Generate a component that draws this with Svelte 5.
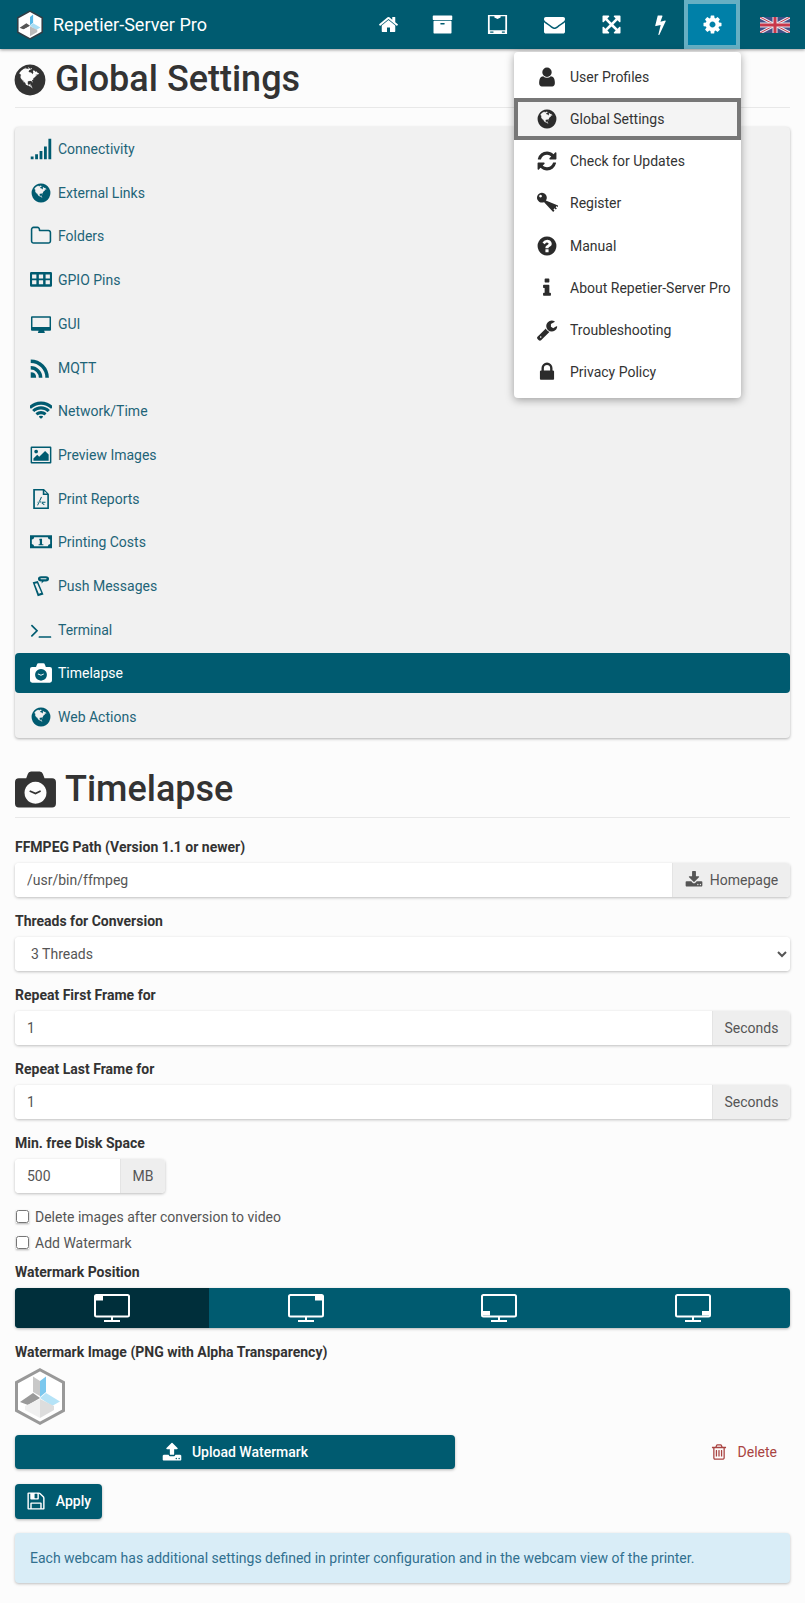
<script lang="ts">
  // Font Awesome 4 style glyphs on a 1792 grid, plus a few drawn for this page
  const icons: Record<string, string> = {
    home: "M1472 992v480q0 26-19 45t-45 19h-384v-384h-256v384h-384q-26 0-45-19t-19-45v-480q0-1 .5-3t.5-3l575-474 575 474q1 2 1 6zm223-69l-62 74q-8 9-21 11h-3q-13 0-21-7l-692-577-692 577q-12 8-24 7-13-2-21-11l-62-74q-8-10-7-23.5t11-21.5l719-599q32-26 76-26t76 26l244 204v-195q0-14 9-23t23-9h192q14 0 23 9t9 23v408l219 182q10 8 11 21.5t-7 23.5z",
    archive: "M1088 832q0-26-19-45t-45-19h-256q-26 0-45 19t-19 45 19 45 45 19h256q26 0 45-19t19-45zm576-192v960q0 26-19 45t-45 19h-1408q-26 0-45-19t-19-45v-960q0-26 19-45t45-19h1408q26 0 45 19t19 45zm64-448v256q0 26-19 45t-45 19h-1536q-26 0-45-19t-19-45v-256q0-26 19-45t45-19h1536q26 0 45 19t19 45z",
    printer: "M80 80h1632v1632H80z M230 200v1190h1332V200h-400v100L896 420 630 300V200z M270 1500h280v90H270z M1270 1500h250v90h-250z",
    envelope: "M1792 710v794q0 66-47 113t-113 47h-1472q-66 0-113-47t-47-113v-794q44 49 101 87 362 246 497 345 57 42 92.5 65.5t94.5 48 110 24.5h2q51 0 110-24.5t94.5-48 92.5-65.5q170-123 498-345 57-39 100-87zm0-294q0 79-49 151t-122 123q-376 261-468 325-10 7-42.5 30.5t-54 38-52 32.5-57.5 27-50 9h-2q-23 0-50-9t-57.5-27-52-32.5-54-38-42.5-30.5q-91-64-262-182.5t-205-142.5q-62-42-117-115.5t-55-136.5q0-78 41.5-130t118.5-52h1472q65 0 112.5 47t47.5 113z",
    expand: "M1411 541l-355 355 355 355 144-144q29-31 70-14 39 17 39 59v448q0 26-19 45t-45 19h-448q-42 0-59-40-17-39 14-69l144-144-355-355-355 355 144 144q31 30 14 69-17 40-59 40h-448q-26 0-45-19t-19-45v-448q0-42 40-59 39-17 69 14l144 144 355-355-355-355-144 144q-19 19-45 19-12 0-24-5-40-17-40-59v-448q0-26 19-45t45-19h448q42 0 59 40 17 39-14 69l-144 144 355 355 355-355-144-144q-31-30-14-69 17-40 59-40h448q26 0 45 19t19 45v448q0 42-39 59-13 5-25 5-26 0-45-19z",
    bolt: "M1333 566q18 20 7 44l-540 1157q-13 25-42 25-4 0-14-2-17-5-25.5-19t-4.5-30l197-808-406 101q-4 1-12 1-18 0-31-11-18-15-13-39l201-825q4-14 16-23t28-9h328q19 0 32 12.5t13 29.5q0 8-5 18l-171 463 396-98q8-2 12-2 19 0 34 15z",
    cog: "M1152 896q0-106-75-181t-181-75-181 75-75 181 75 181 181 75 181-75 75-181zm512-109v222q0 12-8 23t-20 13l-185 28q-19 54-39 91 35 50 107 138 10 12 10 25t-9 23q-27 37-99 108t-94 71q-12 0-26-9l-138-108q-44 23-91 38-16 136-29 186-7 28-36 28h-222q-14 0-24.5-8.5t-11.5-21.5l-28-184q-49-16-90-37l-141 107q-10 9-25 9-14 0-25-11-126-114-165-168-7-10-7-23 0-12 8-23 15-21 51-66.5t54-70.5q-27-50-41-99l-183-27q-13-2-21-12.5t-8-23.5v-222q0-12 8-23t19-13l186-28q14-46 39-92-40-57-107-138-10-12-10-24 0-10 9-23 26-36 98.5-107.5t94.5-71.5q13 0 26 10l138 107q44-23 91-38 16-136 29-186 7-28 36-28h222q14 0 24.5 8.5t11.5 21.5l28 184q49 16 90 37l142-107q9-9 24-9 13 0 25 10 129 119 165 170 7 8 7 22 0 12-8 23-15 21-51 66.5t-54 70.5q26 50 41 98l183 28q13 2 21 12.5t8 23.5z",
    user: "M1536 1399q0 109-62.5 187t-150.5 78h-854q-88 0-150.5-78t-62.5-187q0-85 8.5-160.5t31.5-152 58.5-131 94-89 134.5-34.5q131 128 313 128t313-128q76 0 134.5 34.5t94 89 58.5 131 31.5 152 8.5 160.5zm-256-887q0 159-112.5 271.5t-271.5 112.5-271.5-112.5-112.5-271.5 112.5-271.5 271.5-112.5 271.5 112.5 112.5 271.5z",
    globe: "M896 128q209 0 385.5 103t279.5 279.5 103 385.5-103 385.5-279.5 279.5-385.5 103-385.5-103-279.5-279.5-103-385.5 103-385.5 279.5-279.5 385.5-103zm274 521q-2 1-9.5 9.5t-13.5 9.5q2 0 4.5-5t5-11 3.5-7q6-7 22-15 14-6 52-12 34-8 51 11-2-2 9.5-13t14.5-12q3-2 15-4.5t15-7.5l2-22q-12 1-17.5-7t-6.5-21q0 2-6 8 0-7-4.5-8t-11.5 1-9 1q-10-3-15-7.5t-8-16.5-4-15q-2-5-9.5-11t-9.5-10q-1-2-2.5-5.5t-3-6.5-4-5.5-5.5-2.5-7 5-7.5 10-4.5 5q-3-2-6-1.5t-4.5 1-4.5 3-5 3.5q-3 2-8.5 3t-8.5 2q15-5-1-11-10-4-16-3 9-4 7.5-12t-8.5-14h5q-1-4-8.5-8.5t-17.5-8.5-13-6q-8-5-34-9.5t-33-.5q-5 6-4.5 10.5t4 14 3.5 12.5q1 6-5.5 13t-6.5 12q0 7 14 15.5t10 21.5q-3 8-16 16t-16 12q-5 8-1.5 18.5t10.5 16.5q2 2 1.5 4t-3.5 4.5-5.5 4-6.5 3.5l-3 2q-11 5-20.5-6t-13.5-26q-7-25-16-30-23-8-29 1-5-13-41-26-25-9-58-4 6-1 0-15-7-15-19-12 3-6 4-17.5t1-13.5q3-13 12-23 1-1 7-8.5t9.5-13.5.5-6q35 4 50-11 5-5 11.5-17t10.5-17q9-6 14-5.5t14.5 5.5 14.5 5q14 1 15.5-11t-7.5-20q12 1 3-17-4-7-8-9-12-4-27 5-8 4 2 8-1-1-9.5 10.5t-16.5 17.5-14-5q-1-1-5.5-13.5t-9.5-13.5q-8 0-16 15 3-8-11-15t-24-8q19-12-8-27-7-4-20.5-5t-19.5 4q-5 7-5.5 11.5t5 8 10.5 5.5 11.5 4 8.5 3q14 10 8 14-2 1-8.5 3.5t-11.5 4.5-6 4q-3 4 0 14t-2 14q-5-5-9-17.5t-7-16.5q7 9-25 6l-10-1q-4 0-16 2t-20.5 1-13.5-8q-4-8 0-20 1-4 4-2-4-3-11-9.5t-10-8.5q-46 15-94 41 6 1 12-1 5-2 13-6.5t10-5.5q34-14 42-7l5-5q14 16 20 25-7-4-30-1-20 6-22 12 7 12 5 18-4-3-11.5-10t-14.5-11-15-5q-16 0-22 1-146 80-235 222 7 7 12 8 4 1 5 9t2.5 11 11.5-3q9 8 3 19 1-1 44 27 19 17 21 21 3 11-10 18-1-2-9-9t-9-4q-3 5 .5 18.5t10.5 12.5q-7 0-9.5 16t-2.5 35.5-1 23.5l2 1q-3 12 5.5 34.5t21.5 19.5q-13 3 20 43 6 8 8 9 3 2 12 7.5t15 10 10 10.5q4 5 10 22.5t14 23.5q-2 6 9.5 20t10.5 23q-1 0-2.5 1t-2.5 1q3 7 15.5 14t15.5 13q1 3 2 10t3 11 8 2q2-20-24-62-15-25-17-29-3-5-5.5-15.5t-4.5-14.5q2 0 6 1.5t8.5 3.5 7.5 4 2 3q-3 7 2 17.5t12 18.5 17 19 12 13q6 6 14 19.5t0 13.5q9 0 20 10.5t17 19.5q5 8 8 26t5 24q2 7 8.5 13.5t12.5 9.5l16 8 13 7q5 2 18.5 10.5t21.5 11.5q10 4 16 4t14.5-2.5 13.5-3.5q15-2 29 15t21 21q36 19 55 11-2 1 .5 7.5t8 15.5 9 14.5 5.5 8.5q5 6 18 15t18 15q6-4 7-9-3 8 7 20t18 10q14-3 14-32-31 15-49-18 0-1-2.5-5.5t-4-8.5-2.5-8.5 0-7.5 5-3q9 0 10-3.5t-2-12.5-4-13q-1-8-11-20t-12-15q-5 9-16 8t-16-9q0 1-1.5 5.5t-1.5 6.5q-13 0-15-1 1-3 2.5-17.5t3.5-22.5q1-4 5.5-12t7.5-14.5 4-12.5-4.5-9.5-17.5-2.5q-19 1-26 20-1 3-3 10.5t-5 11.5-9 7q-7 3-24 2t-24-5q-13-8-22.5-29t-9.5-37q0-10 2.5-26.5t3-25-5.5-24.5q3-2 9-9.5t10-10.5q2-1 4.5-1.5t4.5 0 4-1.5 3-6q-1-1-4-3-3-3-4-3 7 3 28.5-1.5t27.5 1.5q15 11 22-2 0-1-2.5-9.5t-.5-13.5q5 27 29 9 3 3 15.5 5t17.5 5q3 2 7 5.5t5.5 4.5 5-.5 8.5-6.5q10 14 12 24 11 40 19 44 7 3 11 2t4.5-9.5 0-14-1.5-12.5l-1-8v-18l-1-8q-15-3-18.5-12t1.5-18.5 15-18.5q1-1 8-3.5t15.5-6.5 12.5-8q21-19 15-35 7 0 11-9-1 0-5-3t-7.5-5-4.5-2q9-5 2-16 5-3 7.5-11t7.5-10q9 12 21 2 8-8 1-16 5-7 20.5-10.5t18.5-9.5q7 2 8-2t1-12 3-12q4-5 15-9t13-5l17-11q3-4 0-4 18 2 31-11 10-11-6-20 3-6-3-9.5t-15-5.5q3-1 11.5-.5t10.5-1.5q15-10-7-16-17-5-43 12z",
    refresh: "M1639 1056q0 5-1 7-64 268-268 434.5t-478 166.5q-146 0-282.5-55t-243.5-157l-129 129q-19 19-45 19t-45-19-19-45v-448q0-26 19-45t45-19h448q26 0 45 19t19 45-19 45l-137 137q71 66 161 102t187 36q134 0 250-65t186-179q11-17 53-117 8-23 30-23h192q13 0 22.5 9.5t9.5 22.5zm25-800v448q0 26-19 45t-45 19h-448q-26 0-45-19t-19-45 19-45l138-138q-148-137-349-137-134 0-250 65t-186 179q-11 17-53 117-8 23-30 23h-199q-13 0-22.5-9.5t-9.5-22.5v-7q65-268 270-434.5t480-166.5q146 0 284 55.5t245 156.5l130-129q19-19 45-19t45 19 19 45z",
    key: "M480 60a400 400 0 1 1 -.1 0z M370 230a110 110 0 1 0 .1 0z M800 700L660 840l740 780 110-110-90-90 90-90 100 100 90-90-100-100 90-90 90 90 20-130z",
    question: "M1024 1376v-192q0-14-9-23t-23-9h-192q-14 0-23 9t-9 23v192q0 14 9 23t23 9h192q14 0 23-9t9-23zm256-672q0-88-55.5-163t-138.5-116-170-41q-243 0-371 213-15 24 8 42l132 100q7 6 19 6 16 0 25-12 53-68 86-92 34-24 86-24 48 0 85.5 26t37.5 59q0 38-20 61t-68 45q-63 28-115.5 86.5t-52.5 125.5v36q0 14 9 23t23 9h192q14 0 23-9t9-23q0-19 21.5-49.5t54.5-49.5q32-18 49-28.5t46-35 44.5-48 28-60.5 12.5-81zm384 192q0 209-103 385.5t-279.5 279.5-385.5 103-385.5-103-279.5-279.5-103-385.5 103-385.5 279.5-279.5 385.5-103 385.5 103 279.5 279.5 103 385.5z",
    info: "M1216 1344v128q0 26-19 45t-45 19h-512q-26 0-45-19t-19-45v-128q0-26 19-45t45-19h64v-384h-64q-26 0-45-19t-19-45v-128q0-26 19-45t45-19h384q26 0 45 19t19 45v576h64q26 0 45 19t19 45zm-128-1152v192q0 26-19 45t-45 19h-256q-26 0-45-19t-19-45v-192q0-26 19-45t45-19h256q26 0 45 19t19 45z",
    wrench: "M448 1472q0-26-19-45t-45-19-45 19-19 45 19 45 45 19 45-19 19-45zm644-420l-682 682q-37 37-90 37-52 0-91-37l-106-108q-38-36-38-90 0-53 38-91l681-681q39 98 114.5 173.5t173.5 114.5zm634-435q0 39-23 106-47 134-164.5 217.5t-258.5 83.5q-185 0-316.5-131.5t-131.5-316.5 131.5-316.5 316.5-131.5q58 0 121.5 16.5t107.5 46.5q16 11 16 28t-16 28l-293 169v224l193 107q5-3 79-48.5t135.5-81 70.5-35.5q15 0 23.5 10t8.5 25z",
    lock: "M640 768h512v-192q0-106-75-181t-181-75-181 75-75 181v192zm832 96v576q0 40-28 68t-68 28h-960q-40 0-68-28t-28-68v-576q0-40 28-68t68-28h32v-192q0-184 132-316t316-132 316 132 132 316v192h32q40 0 68 28t28 68z",
    signal: "M60 1500h230v230H60z M420 1330h230v400H420z M780 1060h230v670H780z M1140 700h230v1030h-230z M1500 60h230v1670h-230z",
    folder: "M1600 1312v-704q0-40-28-68t-68-28h-704q-40 0-68-28t-28-68v-64q0-40-28-68t-68-28h-320q-40 0-68 28t-28 68v960q0 40 28 68t68 28h1216q40 0 68-28t28-68zm128-704v704q0 92-66 158t-158 66h-1216q-92 0-158-66t-66-158v-960q0-92 66-158t158-66h320q92 0 158 66t66 158v32h672q92 0 158 66t66 158z",
    pins: "M100 250h1592q100 0 100 100v1000q0 100-100 100H100q-100 0-100-100V350q0-100 100-100z M170 450h350v330H170z M720 450h350v330H720z M1270 450h350v330h-350z M170 920h350v330H170z M720 920h350v330H720z M1270 920h350v330h-350z",
    desktop: "M160 260h1472q80 0 80 80v1020q0 80-80 80h-480l60 190H640l60-190H160q-80 0-80-80V340q0-80 80-80z M200 380v770h1392V380z",
    rss: "M60 1240q440 0 440 440H60z M60 730A950 950 0 0 1 1010 1680H720A660 660 0 0 0 60 1020z M60 200A1480 1480 0 0 1 1540 1680H1250A1190 1190 0 0 0 60 490z",
    wifi: "M896 1523q-20 0-93-73.5t-73-93.5q0-32 62.5-54t103.5-22 103.5 22 62.5 54q0 20-73 93.5t-93 73.5zm270-271q-2 0-40-25t-101.5-50-128.5-25-128.5 25-101 50-40.5 25q-18 0-93.5-75t-75.5-93q0-13 10-23 78-77 196-121t233-44 233 44 196 121q10 10 10 23 0 18-75.5 93t-93.5 75zm273-272q-11 0-23-8-136-105-252-154.5t-268-49.5q-85 0-170.5 22t-149 53-113.5 62-79 53-31 22q-17 0-92-75t-75-93q0-12 10-22 132-132 320-205t380-73 380 73 320 205q10 10 10 22 0 18-75 93t-92 75zm271-271q-11 0-22-9-179-157-371.5-236.5t-420.5-79.5-420.5 79.5-371.5 236.5q-11 9-22 9-17 0-92.5-75t-75.5-93q0-13 10-23 187-186 445-288t527-102 527 102 445 288q10 10 10 23 0 18-75.5 93t-92.5 75z",
    image: "M130 200h1532q80 0 80 80v1232q0 80-80 80H130q-80 0-80-80V280q0-80 80-80z M170 320v1150h1452V320z M500 460a150 150 0 1 0 .1 0z M280 1360v-170l310-310 160 160 480-480 290 290v510z",
    pdf: "M260 80h880l400 400v1230H260z M400 210v1370h1010V580h-370V210z M1170 240v210h210z M580 1400l320-680 70 30-320 680z M820 1040l370 300-45 55-370-300z M620 1130h640v70H620z",
    money: "M0 350h1792v1050H0z M340 500q-20 180-190 190v370q170 10 190 190h1110q20-180 190-190V690q-170-10-190-190z M780 640h200v440h110v90H700v-90h100V760h-60z",
    push: "M220 600l420-110 460 1090-470 150z M390 720l190-50 340 780-200 70z M900 100h400q250 0 250 210t-250 210h-180l-190 170 40-170h-70q-250 0-250-210t250-210z M900 270h400q60 0 60 40t-60 40H900q-60 0-60-40t60-40z",
    terminal: "M649 983l-466 466q-10 10-23 10t-23-10l-50-50q-10-10-10-23t10-23l393-393-393-393q-10-10-10-23t10-23l50-50q10-10 23-10t23 10l466 466q10 10 10 23t-10 23zm1079 457v64q0 14-9 23t-23 9h-960q-14 0-23-9t-9-23v-64q0-14 9-23t23-9h960q14 0 23 9t9 23z",
    timelapse: "M170 400h320l70-180q30-110 140-110h380q110 0 140 110l70 180h330q170 0 170 170v940q0 170-170 170H170q-170 0-170-170V570q0-170 170-170z M896 560a480 480 0 1 0 .1 0z M896 1110l-270-120 30-60 240 100 210-100 30 60z",
    download: "M1344 1344q0-26-19-45t-45-19-45 19-19 45 19 45 45 19 45-19 19-45zm256 0q0-26-19-45t-45-19-45 19-19 45 19 45 45 19 45-19 19-45zm128-224v320q0 40-28 68t-68 28h-1472q-40 0-68-28t-28-68v-320q0-40 28-68t68-28h465l135 136q58 56 136 56t136-56l136-136h464q40 0 68 28t28 68zm-325-569q17 41-14 70l-448 448q-18 19-45 19t-45-19l-448-448q-31-29-14-70 17-39 59-39h256v-448q0-26 19-45t45-19h256q26 0 45 19t19 45v448h256q42 0 59 39z",
    upload: "M1344 1472q0-26-19-45t-45-19-45 19-19 45 19 45 45 19 45-19 19-45zm256 0q0-26-19-45t-45-19-45 19-19 45 19 45 45 19 45-19 19-45zm128-224v320q0 40-28 68t-68 28h-1472q-40 0-68-28t-28-68v-320q0-40 28-68t68-28h427q21 56 70.5 92t110.5 36h256q61 0 110.5-36t70.5-92h427q40 0 68 28t28 68zm-325-648q-17 40-59 40h-256v448q0 26-19 45t-45 19h-256q-26 0-45-19t-19-45v-448h-256q-42 0-59-40-17-39 14-69l448-448q18-19 45-19t45 19l448 448q31 30 14 69z",
    save: "M512 1536h768v-384h-768v384zm896 0h128v-896q0-14-10-38.5t-20-34.5l-281-281q-10-10-34-20t-39-10v416q0 40-28 68t-68 28h-576q-40 0-68-28t-28-68v-416h-128v1280h128v-416q0-40 28-68t68-28h832q40 0 68 28t28 68v416zm-384-928v-320q0-13-9.5-22.5t-22.5-9.5h-192q-13 0-22.5 9.5t-9.5 22.5v320q0 13 9.5 22.5t22.5 9.5h192q13 0 22.5-9.5t9.5-22.5zm640 32v928q0 40-28 68t-68 28h-1344q-40 0-68-28t-28-68v-1344q0-40 28-68t68-28h928q40 0 88 20t76 48l280 280q28 28 48 76t20 88z",
    trash: "M704 736v576q0 14-9 23t-23 9h-64q-14 0-23-9t-9-23v-576q0-14 9-23t23-9h64q14 0 23 9t9 23zm256 0v576q0 14-9 23t-23 9h-64q-14 0-23-9t-9-23v-576q0-14 9-23t23-9h64q14 0 23 9t9 23zm256 0v576q0 14-9 23t-23 9h-64q-14 0-23-9t-9-23v-576q0-14 9-23t23-9h64q14 0 23 9t9 23zm128 724v-948h-896v948q0 22 7 40.5t14.5 27 10.5 8.5h832q3 0 10.5-8.5t14.5-27 7-40.5zm-672-1076h448l-48-117q-7-9-17-11h-317q-10 2-17 11zm928 32v64q0 14-9 23t-23 9h-96v948q0 83-47 143.5t-113 60.5h-832q-66 0-113-58.5t-47-141.5v-952h-96q-14 0-23-9t-9-23v-64q0-14 9-23t23-9h309l70-167q15-37 54-63t79-26h320q40 0 79 26t54 63l70 167h309q14 0 23 9t9 23z"
  };

  const navItems = [
    { icon: "home", size: "w54" },
    { icon: "archive", size: "w54" },
    { icon: "printer", size: "w56" },
    { icon: "envelope", size: "w58" },
    { icon: "expand", size: "w56" },
    { icon: "bolt", size: "w42" }
  ];

  const menuItems = [
    { icon: "user", label: "User Profiles" },
    { icon: "globe", label: "Global Settings", active: true },
    { icon: "refresh", label: "Check for Updates" },
    { icon: "key", label: "Register" },
    { icon: "question", label: "Manual" },
    { icon: "info", label: "About Repetier-Server Pro" },
    { icon: "wrench", label: "Troubleshooting" },
    { icon: "lock", label: "Privacy Policy" }
  ];

  const sections = [
    { icon: "signal", label: "Connectivity" },
    { icon: "globe", label: "External Links" },
    { icon: "folder", label: "Folders" },
    { icon: "pins", label: "GPIO Pins" },
    { icon: "desktop", label: "GUI" },
    { icon: "rss", label: "MQTT" },
    { icon: "wifi", label: "Network/Time" },
    { icon: "image", label: "Preview Images" },
    { icon: "pdf", label: "Print Reports" },
    { icon: "money", label: "Printing Costs" },
    { icon: "push", label: "Push Messages" },
    { icon: "terminal", label: "Terminal" },
    { icon: "timelapse", label: "Timelapse", active: true },
    { icon: "globe", label: "Web Actions" }
  ];

  // corner marker of each monitor button: x, y inside the screen
  const positions = [
    { x: 2, y: 2, active: true },
    { x: 27, y: 2 },
    { x: 2, y: 17 },
    { x: 27, y: 17 }
  ];
</script>

{#snippet icon(name, cls = "")}
  <svg class="icon {cls}" viewBox="0 0 1792 1792" aria-hidden="true">
    <path fill="currentColor" fill-rule="evenodd" d={icons[name]} />
  </svg>
{/snippet}

{#snippet logo(cls)}
  <svg class="logo {cls}" viewBox="0 0 50 57" aria-hidden="true">
    <polygon class="ring" points="25,1.7 48.5,14.5 48.5,42.5 25,55.3 1.5,42.5 1.5,14.5" />
    <polygon class="w1" points="18,8.5 25,13 25,28 18,24" />
    <polygon class="w2" points="25,13 31,8.5 31,24 25,29" />
    <polygon class="w3" points="25,30 31,25 45,33.5 37,38" />
    <polygon class="w4" points="5,34 18,25 25,30 13,37" />
    <polygon class="w5" points="10,38 25,31 25,50 10,42" />
    <polygon class="w6" points="25,31 39,38 39,42 25,50" />
  </svg>
{/snippet}

<div class="page">
  <header class="topbar">
    <div class="brand">
      {@render logo("logo-head")}
      <span>Repetier-Server Pro</span>
    </div>
    <nav class="nav">
      {#each navItems as item}
        <span class="nav-item {item.size}">{@render icon(item.icon, "nav-icon")}</span>
      {/each}
      <span class="nav-active">{@render icon("cog", "nav-icon")}</span>
      <svg class="flag" viewBox="0 0 60 32" aria-hidden="true">
        <rect width="60" height="32" fill="#3f4f86" />
        <path d="M0 0L60 32M60 0L0 32" stroke="#e8e8ee" stroke-width="6" />
        <path d="M0 0L60 32M60 0L0 32" stroke="#c9384a" stroke-width="2" />
        <path d="M30 0V32M0 16H60" stroke="#e8e8ee" stroke-width="10" />
        <path d="M30 0V32M0 16H60" stroke="#c9384a" stroke-width="6" />
      </svg>
    </nav>
  </header>

  <ul class="menu">
    {#each menuItems as item}
      <li class="menu-item" class:active={item.active}>
        {@render icon(item.icon, "menu-icon")}
        <span>{item.label}</span>
      </li>
    {/each}
  </ul>

  <main class="content">
    <h1 class="title first">{@render icon("globe", "title-icon")}Global Settings</h1>

    <ul class="sections">
      {#each sections as item}
        <li class="section" class:active={item.active}>
          {@render icon(item.icon, "section-icon")}
          <span>{item.label}</span>
        </li>
      {/each}
    </ul>

    <h1 class="title second">{@render icon("timelapse", "title-icon big")}Timelapse</h1>

    <div class="field">
      <label for="ffmpeg">FFMPEG Path (Version 1.1 or newer)</label>
      <div class="group">
        <input id="ffmpeg" type="text" value="/usr/bin/ffmpeg" />
        <span class="addon home-addon">{@render icon("download", "addon-icon")}Homepage</span>
      </div>
    </div>

    <div class="field">
      <label for="threads">Threads for Conversion</label>
      <div class="group">
        <select id="threads">
          <option>3 Threads</option>
        </select>
      </div>
    </div>

    <div class="field">
      <label for="first">Repeat First Frame for</label>
      <div class="group">
        <input id="first" type="text" value="1" />
        <span class="addon sec-addon">Seconds</span>
      </div>
    </div>

    <div class="field">
      <label for="last">Repeat Last Frame for</label>
      <div class="group">
        <input id="last" type="text" value="1" />
        <span class="addon sec-addon">Seconds</span>
      </div>
    </div>

    <div class="field disk">
      <label for="disk">Min. free Disk Space</label>
      <div class="group">
        <input id="disk" type="text" value="500" />
        <span class="addon mb-addon">MB</span>
      </div>
    </div>

    <div class="check"><input id="del" type="checkbox" /><label for="del">Delete images after conversion to video</label></div>
    <div class="check"><input id="mark" type="checkbox" /><label for="mark">Add Watermark</label></div>

    <div class="field position">
      <span class="label">Watermark Position</span>
      <div class="positions">
        {#each positions as pos}
          <div class="pos" class:active={pos.active}>
            <svg class="monitor" viewBox="0 0 36 28" aria-hidden="true">
              <rect x="1" y="1" width="34" height="21.5" rx="1.5" fill="none" stroke="#fff" stroke-width="2" />
              <rect x={pos.x} y={pos.y} width="7" height="4.5" fill="#fff" />
              <path d="M18 23v3M10 27h16" stroke="#fff" stroke-width="2" fill="none" />
            </svg>
          </div>
        {/each}
      </div>
    </div>

    <div class="field watermark">
      <span class="label">Watermark Image (PNG with Alpha Transparency)</span>
      {@render logo("logo-mark")}
    </div>

    <div class="upload-row">
      <button class="btn upload">{@render icon("upload", "btn-icon")}Upload Watermark</button>
      <span class="delete">{@render icon("trash", "delete-icon")}Delete</span>
    </div>

    <button class="btn apply">{@render icon("save", "btn-icon")}Apply</button>

    <div class="alert">Each webcam has additional settings defined in printer configuration and in the webcam view of the printer.</div>
  </main>
</div>

<style>
  :global(body) {
    margin: 0;
    background: #fcfcfc;
    font-family: Roboto, "Liberation Sans", sans-serif;
    font-size: 14px;
    color: #333;
  }
  .page {
    position: relative;
    min-height: 1603px;
  }
  .icon {
    display: block;
    flex: none;
  }

  .topbar {
    height: 49px;
    display: flex;
    align-items: center;
    justify-content: space-between;
    background: #005b70;
    box-shadow: 0 1px 3px rgba(0, 0, 0, 0.4);
    padding-right: 15px;
  }
  .brand {
    display: flex;
    align-items: center;
    gap: 10px;
    padding-left: 17px;
    color: #fff;
    font-size: 18px;
  }
  .logo {
    display: block;
  }
  .logo-head {
    width: 26px;
    height: 30px;
  }
  .logo-head .ring {
    fill: #fff;
    stroke: #2f3d45;
    stroke-width: 3;
  }
  .logo-head .w1 { fill: #fff; }
  .logo-head .w2 { fill: #55b7e6; }
  .logo-head .w3 { fill: #a9def5; }
  .logo-head .w4 { fill: #555; }
  .logo-head .w5 { fill: #fff; }
  .logo-head .w6 { fill: #bbb; }
  .logo-mark {
    width: 50px;
    height: 57px;
  }
  .logo-mark .ring {
    fill: #fff;
    stroke: #999;
    stroke-width: 3;
  }
  .logo-mark .w1 { fill: #c8c8c8; }
  .logo-mark .w2 { fill: #7cc8ee; }
  .logo-mark .w3 { fill: #b5e3f7; }
  .logo-mark .w4 { fill: #9a9a9a; }
  .logo-mark .w5 { fill: #f0f0f0; }
  .logo-mark .w6 { fill: #ddd; }

  .nav {
    display: flex;
    align-items: center;
    height: 49px;
    color: #fff;
  }
  .nav-item {
    display: flex;
    justify-content: center;
  }
  .w42 { width: 42px; margin-right: 3px; }
  .w54 { width: 54px; }
  .w56 { width: 56px; }
  .w58 { width: 58px; }
  :global(.nav-icon) {
    width: 21px;
    height: 21px;
  }
  .nav-active {
    box-sizing: border-box;
    width: 56px;
    height: 49px;
    display: flex;
    align-items: center;
    justify-content: center;
    background: #0080a8;
    border: 4px solid #66afc3;
    margin-right: 20px;
  }
  .flag {
    width: 30px;
    height: 16px;
  }

  .menu {
    position: absolute;
    top: 52px;
    left: 514px;
    width: 227px;
    box-sizing: border-box;
    list-style: none;
    margin: 0;
    padding: 4px 0 5px;
    background: #fff;
    border-radius: 4px;
    box-shadow: 0 2px 8px rgba(0, 0, 0, 0.35);
    z-index: 5;
  }
  .menu-item {
    height: 42.15px;
    box-sizing: border-box;
    display: flex;
    align-items: center;
    gap: 12px;
    padding-left: 22px;
    color: #333;
    white-space: nowrap;
  }
  .menu-item.active {
    background: #f4f4f4;
    border: 4px solid #777;
    padding-left: 18px;
  }
  :global(.menu-icon) {
    width: 22px;
    height: 22px;
    color: #2b2b2b;
  }

  .content {
    padding: 0 15px;
  }
  .title {
    display: flex;
    align-items: center;
    margin: 0;
    font-size: 36px;
    line-height: 43px;
    font-weight: 500;
    color: #333;
    border-bottom: 1px solid #e8e8e8;
  }
  .first {
    gap: 7px;
    padding: 9px 0 6px;
    margin-bottom: 19px;
  }
  .second {
    gap: 9px;
    margin-top: 30px;
    padding-bottom: 6px;
    margin-bottom: 19px;
  }
  :global(.title-icon) {
    width: 36px;
    height: 36px;
    margin-left: -3px;
    color: #333;
  }
  :global(.title-icon.big) {
    width: 41px;
    height: 41px;
    margin-left: 0;
  }

  .sections {
    list-style: none;
    margin: 0;
    padding: 2.1px 0 0.8px;
    display: flex;
    flex-direction: column;
    gap: 3.7px;
    background: #f1f1f1;
    border-radius: 4px;
    box-shadow: 0 1px 3px rgba(0, 0, 0, 0.3);
  }
  .section {
    height: 40px;
    display: flex;
    align-items: center;
    gap: 6px;
    padding-left: 15px;
    color: #1e6478;
    border-radius: 4px;
  }
  .section.active {
    background: #005b70;
    color: #fff;
  }
  :global(.section-icon) {
    width: 22px;
    height: 22px;
    color: #005b70;
  }
  .section.active :global(.section-icon) {
    color: #fff;
  }

  .field {
    margin-bottom: 14px;
  }
  .field label,
  .label {
    display: block;
    height: 20px;
    line-height: 20px;
    margin-bottom: 6px;
    font-weight: 700;
    color: #333;
  }
  .group {
    display: flex;
    height: 34px;
    border-radius: 4px;
    box-shadow: 0 1px 3px rgba(0, 0, 0, 0.25);
    background: #fff;
  }
  .group input,
  .group select {
    flex: 1;
    min-width: 0;
    box-sizing: border-box;
    border: 0;
    outline: 0;
    background: #fff;
    padding: 0 12px;
    font: inherit;
    color: #555;
    border-radius: 4px;
  }
  .addon {
    box-sizing: border-box;
    display: flex;
    align-items: center;
    justify-content: center;
    background: #eee;
    color: #555;
    border-radius: 0 4px 4px 0;
    border-left: 1px solid #e4e4e4;
  }
  .home-addon { width: 118px; gap: 7px; }
  .sec-addon { width: 78px; }
  .mb-addon { width: 45px; }
  :global(.addon-icon) {
    width: 18px;
    height: 18px;
    color: #555;
  }
  .disk {
    width: 150px;
    margin-bottom: 11px;
  }
  .disk input {
    width: 105px;
    flex: none;
  }

  .check {
    height: 26px;
    display: flex;
    align-items: center;
    gap: 6px;
    color: #555;
  }
  .check input {
    width: 13px;
    height: 13px;
    margin: 0 0 0 1px;
    box-shadow: 0 1px 2px rgba(0, 0, 0, 0.3);
  }

  .position {
    margin-top: 6px;
  }
  .positions {
    height: 40px;
    display: grid;
    grid-template-columns: repeat(4, 1fr);
    background: #005b70;
    border-radius: 4px;
    overflow: hidden;
    box-shadow: 0 1px 3px rgba(0, 0, 0, 0.3);
  }
  .pos {
    display: flex;
    align-items: center;
    justify-content: center;
  }
  .pos.active {
    background: #002f3b;
  }
  .monitor {
    width: 36px;
    height: 28px;
    display: block;
  }

  .watermark {
    margin-bottom: 10px;
  }
  .upload-row {
    display: flex;
    align-items: center;
    justify-content: space-between;
    padding-right: 13px;
    margin-bottom: 15px;
  }
  .btn {
    display: flex;
    align-items: center;
    justify-content: center;
    gap: 10px;
    border: 0;
    padding: 0;
    border-radius: 4px;
    background: #005b70;
    color: #fff;
    font: inherit;
    font-weight: 500;
    box-shadow: 0 1px 3px rgba(0, 0, 0, 0.3);
  }
  .upload {
    width: 440px;
    height: 34px;
  }
  .apply {
    width: 87px;
    height: 35px;
    margin-bottom: 14px;
  }
  :global(.btn-icon) {
    width: 20px;
    height: 20px;
  }
  .delete {
    display: flex;
    align-items: center;
    gap: 10px;
    color: #a94442;
  }
  :global(.delete-icon) {
    width: 18px;
    height: 18px;
  }
  .alert {
    box-sizing: border-box;
    height: 50px;
    display: flex;
    align-items: center;
    padding: 0 15px;
    background: #d9edf7;
    color: #31708f;
    border-radius: 4px;
    box-shadow: 0 1px 3px rgba(0, 0, 0, 0.25);
  }
</style>
